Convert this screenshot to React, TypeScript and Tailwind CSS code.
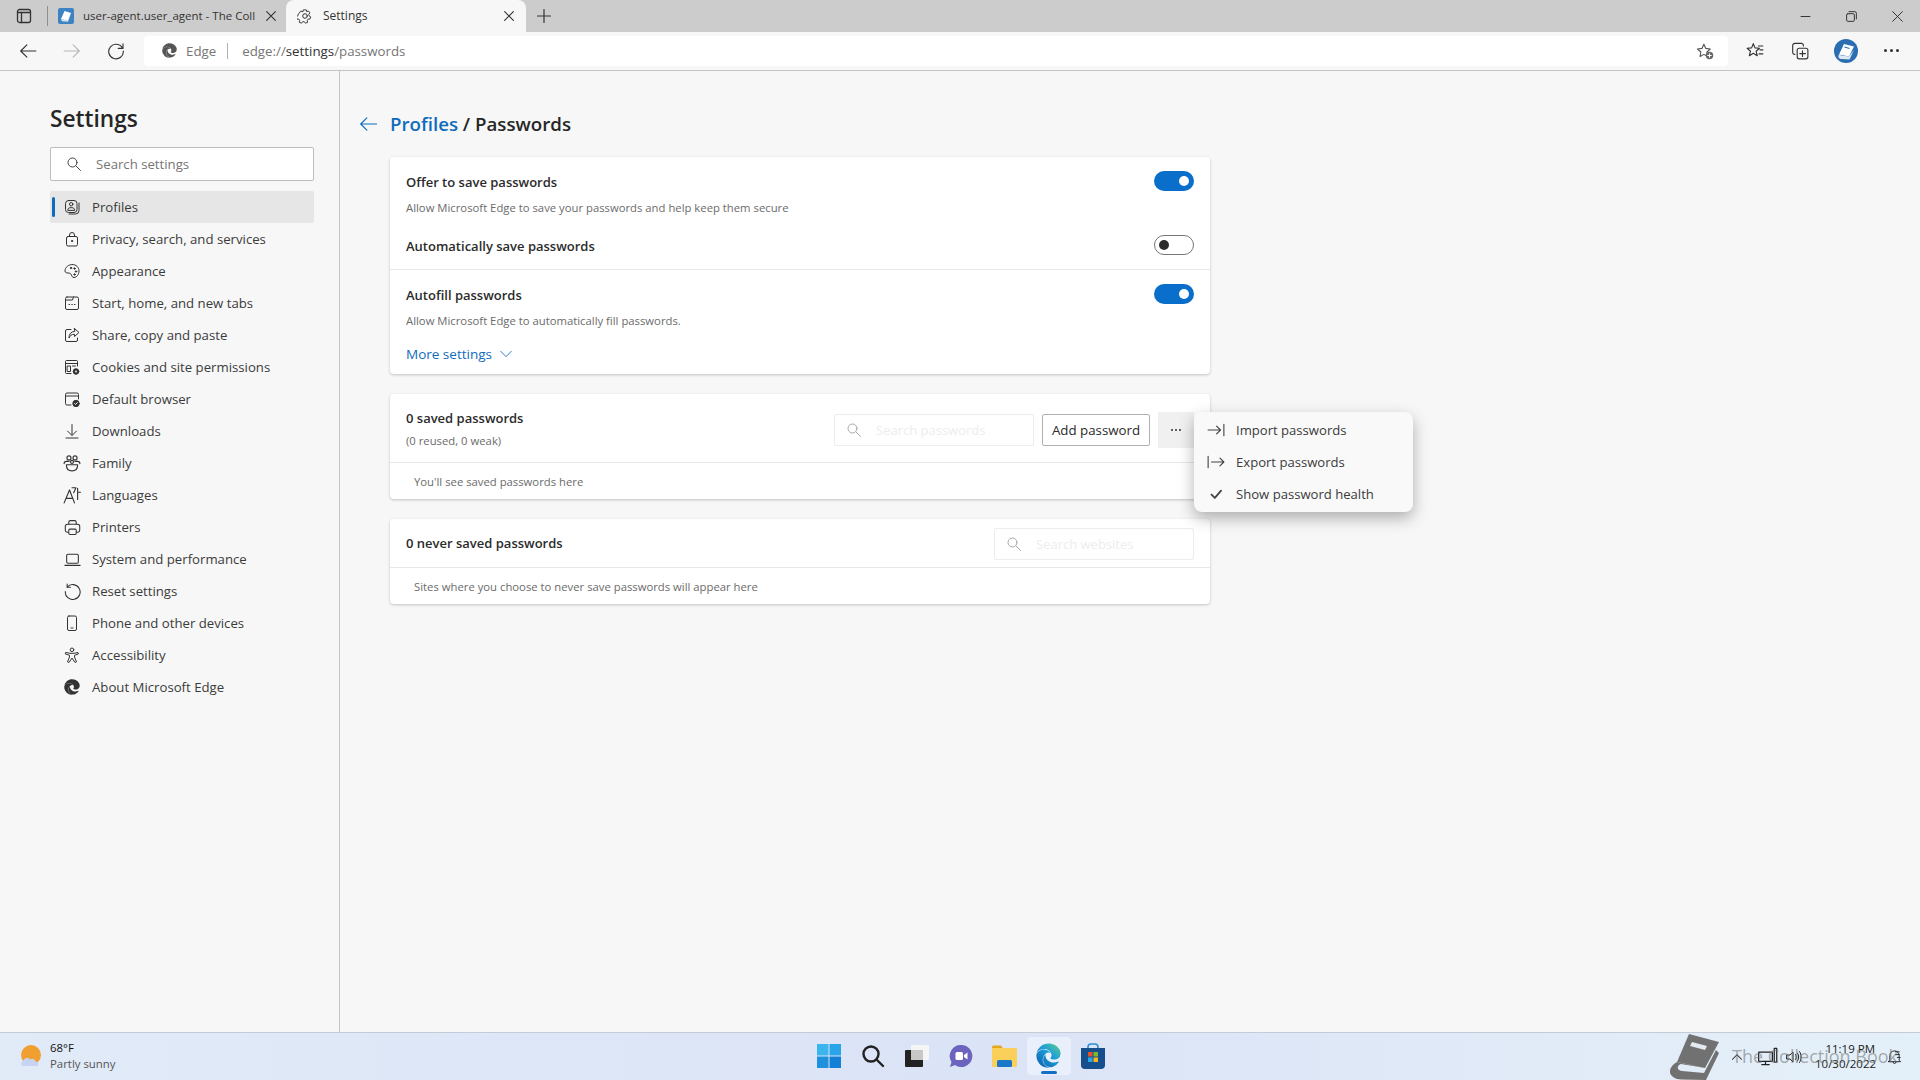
import type { ReactNode } from "react";
import { FaEdge } from "react-icons/fa";

function Ic({ size = 16, className = "", children }: { size?: number; className?: string; children: ReactNode }) {
  return (
    <svg width={size} height={size} viewBox="0 0 16 16" fill="none" stroke="currentColor" strokeWidth="1" strokeLinecap="round" strokeLinejoin="round" className={className}>
      {children}
    </svg>
  );
}

function BookLogo({ size = 18 }: { size?: number }) {
  return (
    <svg width={size} height={size} viewBox="0 0 24 24">
      <circle cx="12" cy="12" r="12" fill="#2a6db0" />
      <path d="M5 15.5 L10 5 L20 7.5 L15 17.5 Z" fill="#fff" />
      <path d="M5 15.5 C3.5 18 5 20 8 20 L15.5 20.5 L20 11 L15 17.5 L7.5 16.5 Z" fill="#dfe9f3" />
      <path d="M10.5 8 L15.5 9.5" stroke="#2a6db0" strokeWidth="1.3" />
    </svg>
  );
}

const SearchIcon = ({ className = "" }: { className?: string }) => (
  <Ic className={className}>
    <circle cx="6.5" cy="6.5" r="4.5" />
    <path d="M10 10l4.5 4.5" />
  </Ic>
);

const Gear = () => (
  <Ic size={16}>
    <path d="M6.6 1.5h2.8l.4 2 1.8-.9 1.7 2.2-1.4 1.4.4 1.7 1.7.9-.7 2.6-2 0-1 1.5.6 1.9-2.5 1-1.2-1.6-1.8 0-1.2 1.6-2.5-1 .6-1.9-1-1.5-2 0-.7-2.6 1.7-.9.4-1.7L1.8 4.8 3.5 2.6l1.8.9z" transform="translate(.6 .5) scale(.93)" />
    <circle cx="8" cy="8" r="2.3" />
  </Ic>
);

const navItems: { label: string; icon: ReactNode; active?: boolean }[] = [
  {
    label: "Profiles",
    active: true,
    icon: (
      <Ic>
        <rect x="1.5" y="1.5" width="11.5" height="12" rx="3" />
        <circle cx="7.2" cy="5.2" r="1.7" />
        <path d="M3.8 11c0-1.6 1-2.4 3.4-2.4s3.4.8 3.4 2.4zM15 4v7.5a3.5 3.5 0 0 1-3.5 3.5H5" />
      </Ic>
    ),
  },
  {
    label: "Privacy, search, and services",
    icon: (
      <Ic>
        <rect x="2.5" y="5.5" width="11" height="9.5" rx="1.5" />
        <path d="M5.5 5.5V4a2.5 2.5 0 0 1 5 0v1.5" />
        <circle cx="8" cy="10" r=".6" fill="currentColor" />
      </Ic>
    ),
  },
  {
    label: "Appearance",
    icon: (
      <Ic>
        <path d="M8.5 1.5c3.6 0 6.5 2.8 6.5 6.4 0 3.6-2.4 6.6-5 6.6-1.8 0-2-1.2-2.6-2.6-.6-1.5-1.6-1.9-3.4-1.9C2.3 10 1 9.5 1 8c0-3.8 3.5-6.5 7.5-6.5z" />
        <circle cx="7" cy="5" r=".7" fill="currentColor" />
        <circle cx="10.5" cy="5.5" r=".7" fill="currentColor" />
        <circle cx="12" cy="8.5" r=".7" fill="currentColor" />
        <circle cx="10.5" cy="11.5" r=".7" fill="currentColor" />
      </Ic>
    ),
  },
  {
    label: "Start, home, and new tabs",
    icon: (
      <Ic>
        <rect x="1.5" y="2" width="13" height="12.5" rx="1.5" />
        <path d="M1.5 5h7l1-3" />
        <path d="M5 9.5h.5M7.8 9.5h.5M10.5 9.5h.5" strokeWidth="1.2" />
      </Ic>
    ),
  },
  {
    label: "Share, copy and paste",
    icon: (
      <Ic>
        <path d="M7 2.5H3A1.5 1.5 0 0 0 1.5 4v9A1.5 1.5 0 0 0 3 14.5h9a1.5 1.5 0 0 0 1.5-1.5v-2" />
        <path d="M10.5 1.5L15 5.5l-4.5 4V7.3C7.5 7.3 6 8.5 5 11c0-4 2-6.3 5.5-6.7z" />
      </Ic>
    ),
  },
  {
    label: "Cookies and site permissions",
    icon: (
      <Ic>
        <path d="M7 14.5H2.5a1 1 0 0 1-1-1V2.5a1 1 0 0 1 1-1h10a1 1 0 0 1 1 1V7" />
        <path d="M1.5 4.5h12M3.5 7h3v5.5h-3zM8.5 7h3" />
        <circle cx="12" cy="12.5" r="2.8" fill="currentColor" />
        <circle cx="12" cy="12.5" r=".9" fill="#f7f7f7" stroke="none" />
      </Ic>
    ),
  },
  {
    label: "Default browser",
    icon: (
      <Ic>
        <path d="M7 14H3a1.5 1.5 0 0 1-1.5-1.5v-9A1.5 1.5 0 0 1 3 2h10a1.5 1.5 0 0 1 1.5 1.5V8M1.5 5h13" />
        <circle cx="12" cy="12.5" r="3.2" fill="currentColor" />
        <path d="M10.6 12.5l1 1 1.8-1.9" stroke="#f7f7f7" />
      </Ic>
    ),
  },
  {
    label: "Downloads",
    icon: (
      <Ic>
        <path d="M8 1.5v10.5M3.5 8l4.5 4.5L12.5 8M2 15h12" />
      </Ic>
    ),
  },
  {
    label: "Family",
    icon: (
      <Ic size={18}>
        <circle cx="5.3" cy="3.5" r="1.8" />
        <circle cx="10.7" cy="3.5" r="1.8" />
        <path d="M1 8.5c0-1.3.7-2 2-2h2.5M15 8.5c0-1.3-.7-2-2-2h-2.5" />
        <circle cx="8" cy="7" r="1.3" />
        <path d="M3 9.5h10c0 3.5-2 5.5-5 5.5s-5-2-5-5.5z" />
      </Ic>
    ),
  },
  {
    label: "Languages",
    icon: (
      <Ic size={18}>
        <path d="M1 15L5.8 3.5 10.2 15M2.8 11h6M8 1.5h3.5L9.5 6M13 2v10M13 5.5h2.5" />
      </Ic>
    ),
  },
  {
    label: "Printers",
    icon: (
      <Ic size={17}>
        <path d="M4.5 5V3a1.5 1.5 0 0 1 1.5-1.5h4A1.5 1.5 0 0 1 11.5 3v2" />
        <path d="M4 12.5H3A1.8 1.8 0 0 1 1.2 10.7V7A2 2 0 0 1 3.2 5h9.6a2 2 0 0 1 2 2v3.7A1.8 1.8 0 0 1 13 12.5h-1" />
        <rect x="4.5" y="9.5" width="7" height="5" rx="1" />
      </Ic>
    ),
  },
  {
    label: "System and performance",
    icon: (
      <Ic size={17}>
        <rect x="2.5" y="3" width="11" height="8.5" rx="1.3" />
        <path d="M.8 13.5h14.4" />
      </Ic>
    ),
  },
  {
    label: "Reset settings",
    icon: (
      <Ic size={17}>
        <path d="M3 3.8A7 7 0 1 1 1.2 8" />
        <path d="M3 1v3h3" />
      </Ic>
    ),
  },
  {
    label: "Phone and other devices",
    icon: (
      <Ic>
        <rect x="3.5" y="1" width="9" height="14.5" rx="1.5" />
        <path d="M7 13h2" />
      </Ic>
    ),
  },
  {
    label: "Accessibility",
    icon: (
      <Ic>
        <circle cx="8" cy="2.8" r="1.8" />
        <path d="M2 5.5L6 6.3h4L14 5.5 14.4 7 10.5 8.3V10l2 4.8-1.5.7L8 11l-3 4.5-1.5-.7 2-4.8V8.3L1.6 7z" />
      </Ic>
    ),
  },
  { label: "About Microsoft Edge", icon: <FaEdge size={16} className="text-[#333]" /> },
];

function Toggle({ on }: { on?: boolean }) {
  if (on) {
    return (
      <div className="flex h-5 w-10 items-center justify-end rounded-full bg-[#0a6ecb] px-[5px]">
        <div className="h-[10px] w-[10px] rounded-full bg-white" />
      </div>
    );
  }
  return (
    <div className="flex h-5 w-10 items-center rounded-full border border-[#767676] bg-white px-1">
      <div className="h-[10px] w-[10px] rounded-full bg-[#2b2b2b]" />
    </div>
  );
}

function SettingRow({ title, desc, on }: { title: string; desc?: string; on?: boolean }) {
  return (
    <div className="px-4">
      <div className="flex items-center justify-between">
        <span className="mt-[2px] text-[13px] font-semibold leading-[18px] text-[#2b2b2b]">{title}</span>
        <Toggle on={on} />
      </div>
      {desc && <div className="mt-[7px] h-5 text-[11.3px] leading-5 text-[#6b6b6b]">{desc}</div>}
    </div>
  );
}

function SearchBox({ placeholder }: { placeholder: string }) {
  return (
    <div className="flex h-8 w-[200px] items-center rounded-[2px] border border-[#ececec] bg-white pl-[11px] text-[13px] text-[#ededed]">
      <SearchIcon className="text-[#a8a8a8]" />
      <span className="ml-[14px] mt-[2px]">{placeholder}</span>
    </div>
  );
}

function Card({ children, className = "" }: { children: ReactNode; className?: string }) {
  return <section className={`w-[820px] rounded-[4px] bg-white shadow-[0_1px_3px_rgba(0,0,0,0.22)] ${className}`}>{children}</section>;
}

function BookIconTab() {
  return (
    <svg width="16" height="16" viewBox="0 0 16 16">
      <rect width="16" height="16" rx="2" fill="#3d83c4" />
      <path d="M3 11L6.5 3l6.5 2L10 13z" fill="#fff" />
      <path d="M3 11c0 2 1.5 2.5 3 2.5L10 13.8 13 6 10 13 5 11.5z" fill="#cfe0f0" />
    </svg>
  );
}

function TabBar() {
  return (
    <div className="flex h-8 items-end bg-[#cccccc] text-[#333]">
      <div className="flex h-8 w-[47px] items-center justify-center">
        <Ic size={16}>
          <rect x="1.5" y="1.5" width="13" height="13" rx="2" strokeWidth="1.3" />
          <path d="M1.5 4.5h13M5.5 4.5v10" strokeWidth="1.3" />
        </Ic>
      </div>
      <div className="h-[20px] w-px self-center bg-[#8f8f8f]" />
      <div className="flex h-8 w-[238px] items-center pl-[10px] text-[11.5px]">
        <BookIconTab />
        <span className="ml-[9px] w-[172px] overflow-hidden whitespace-nowrap">user-agent.user_agent - The Coll</span>
        <Ic size={14} className="ml-[9px]"><path d="M3 3l10 10M13 3L3 13" strokeWidth="1.3" /></Ic>
      </div>
      <div className="flex h-8 w-[240px] items-center rounded-t-[8px] bg-[#f7f7f7] pl-[11px] pr-[10px] text-[12px]">
        <Gear />
        <span className="ml-[10px] flex-1">Settings</span>
        <Ic size={14}><path d="M3 3l10 10M13 3L3 13" strokeWidth="1.3" /></Ic>
      </div>
      <div className="flex h-8 w-9 items-center justify-center">
        <Ic size={16}><path d="M8 1.5v13M1.5 8h13" strokeWidth="1.2" /></Ic>
      </div>
      <div className="ml-auto flex h-8">
        <div className="flex w-[46px] items-center justify-center"><Ic size={13}><path d="M2.5 8h11" strokeWidth="1.2" /></Ic></div>
        <div className="flex w-[46px] items-center justify-center">
          <Ic size={13}><rect x="2" y="4.5" width="9.5" height="9.5" rx="1.5" strokeWidth="1.2" /><path d="M5 2h7a2 2 0 0 1 2 2v7" strokeWidth="1.2" /></Ic>
        </div>
        <div className="flex w-[46px] items-center justify-center"><Ic size={13}><path d="M2 2l12 12M14 2L2 14" strokeWidth="1.2" /></Ic></div>
      </div>
    </div>
  );
}

function Toolbar() {
  return (
    <div className="flex h-[39px] items-center border-b border-[#c4c4c4] bg-[#f7f7f7] pb-[1px] text-[#333]">
      <div className="flex w-[144px] items-center pl-[19px]">
        <Ic size={18}><path d="M15 8H1.5M7 2.5L1.5 8 7 13.5" /></Ic>
        <Ic size={18} className="ml-[26px] text-[#b8b8b8]"><path d="M1 8h13.5M9 2.5L14.5 8 9 13.5" /></Ic>
        <Ic size={18} className="ml-[26px]"><path d="M13.8 5.5A6.5 6.5 0 1 0 14.5 8M14.2 1.5v4.2H10" /></Ic>
      </div>
      <div className="flex h-[30px] w-[1584px] items-center rounded-[4px] bg-white pl-[18px] pr-[14px] text-[13.3px] text-[#767676]">
        <FaEdge size={15} className="text-[#555]" />
        <span className="ml-[9px] mt-[2px]">Edge</span>
        <div className="ml-[11px] mr-[14px] h-[16px] w-px bg-[#b0b0b0]" />
        <span className="mt-[2px]">edge://<span className="text-[#333]">settings</span>/passwords</span>
        <Ic size={18} className="ml-auto text-[#555]">
          <path d="M7 2l1.7 3.7 4 .5-3 2.7.7 4L7 11l-3.4 1.9.7-4-3-2.7 4-.5z" />
          <circle cx="12" cy="12" r="3.3" fill="#666" stroke="none" />
          <path d="M12 10.4v3.2M10.4 12h3.2" stroke="#fff" />
        </Ic>
      </div>
      <div className="flex flex-1 items-center pl-[18px]">
        <Ic size={18}>
          <path d="M6.5 1.5l1.5 3.7 4 .4-3 2.6 1 4-3.5-2.2L3 12.2l1-4L1 5.6l4-.4zM11 3.5h4M12.5 7h2.5M11.5 10.5h3.5" />
        </Ic>
        <Ic size={18} className="ml-[27px]">
          <rect x="5.5" y="5.5" width="9.5" height="9.5" rx="1.8" />
          <path d="M10.2 7.8v5M7.8 10.3h5M11 3.5V3A1.8 1.8 0 0 0 9 1.2H3.5a2 2 0 0 0-2 2V9a1.8 1.8 0 0 0 2 2" />
        </Ic>
        <div className="ml-[25px]"><BookLogo size={24} /></div>
        <div className="ml-[26px] flex gap-[3px]">
          <i className="h-[3px] w-[3px] rounded-full bg-[#333]" />
          <i className="h-[3px] w-[3px] rounded-full bg-[#333]" />
          <i className="h-[3px] w-[3px] rounded-full bg-[#333]" />
        </div>
      </div>
    </div>
  );
}

function Sidebar() {
  return (
    <aside className="w-[340px] shrink-0 border-r border-[#c4c4c4] pl-[50px] pr-[25px] pt-[32px]">
      <h1 className="text-[22.7px] font-semibold leading-8 text-[#262626]">Settings</h1>
      <div className="mt-[12px] flex h-[34px] items-center rounded-[2px] border border-[#bdbdbd] bg-white pl-[15px] text-[13.2px] text-[#767676]">
        <SearchIcon className="text-[#444]" />
        <span className="ml-[14px] mt-[2px]">Search settings</span>
      </div>
      <nav className="mt-[10px]">
        {navItems.map((item) => (
          <div key={item.label} className={`relative flex h-8 items-center rounded-[2px] text-[13.2px] text-[#3b3b3b] ${item.active ? "bg-[#e6e6e6]" : ""}`}>
            {item.active && <div className="absolute left-[2px] top-[6px] h-5 w-[3px] rounded-full bg-[#0f6cbd]" />}
            <div className="flex w-[42px] justify-center pl-[2px] text-[#333]">{item.icon}</div>
            <span className="mt-[2px]">{item.label}</span>
          </div>
        ))}
      </nav>
    </aside>
  );
}

function PasswordMenu() {
  const rows = [
    { label: "Import passwords", icon: <path d="M1 8h11M8.5 4.5L12 8l-3.5 3.5M15 3v10" /> },
    { label: "Export passwords", icon: <path d="M1 3v10M4 8h11M11.5 4.5L15 8l-3.5 3.5" /> },
    { label: "Show password health", icon: <path d="M4 8.5L7 11.5 12.5 5" strokeWidth="1.6" /> },
  ];
  return (
    <div className="absolute left-[804px] top-[18px] w-[219px] rounded-[8px] bg-[#f9f9f9] py-[2px] shadow-[0_6px_16px_rgba(0,0,0,0.3)]">
      {rows.map((r) => (
        <div key={r.label} className="flex h-8 items-center pl-[13px] text-[13.1px] text-[#3b3b3b]">
          <Ic size={18} className="text-[#444]">{r.icon}</Ic>
          <span className="ml-[11px] mt-[2px]">{r.label}</span>
        </div>
      ))}
    </div>
  );
}

function Main() {
  return (
    <main className="flex-1 pl-[19px] pt-[37px]">
      <div className="flex h-8 items-center">
        <Ic size={18} className="text-[#0f6cbd]"><path d="M16 8H1.5M7 2.5L1.5 8 7 13.5" /></Ic>
        <div className="ml-[13px] text-[18.7px] font-semibold">
          <span className="text-[#0f6cbd]">Profiles</span>
          <span className="text-[#262626]"> / Passwords</span>
        </div>
      </div>
      <div className="ml-[31px] mt-[17px] flex flex-col gap-5">
        <Card className="h-[217px] pt-[14px]">
          <SettingRow title="Offer to save passwords" desc="Allow Microsoft Edge to save your passwords and help keep them secure" on />
          <div className="mt-[17px] h-[35px] border-b border-[#e8e8e8]">
            <SettingRow title="Automatically save passwords" />
          </div>
          <div className="mt-[14px]">
            <SettingRow title="Autofill passwords" desc="Allow Microsoft Edge to automatically fill passwords." on />
          </div>
          <div className="mt-[13px] flex items-center px-4 text-[13.5px] text-[#0f6cbd]">
            More settings
            <Ic size={14} className="ml-[7px]"><path d="M2 5l6 6 6-6" /></Ic>
          </div>
        </Card>
        <div className="relative">
          <Card className="h-[105px]">
            <div className="flex h-[69px] items-center justify-between border-b border-[#e8e8e8] pl-4 pr-[16px] pt-[3px]">
              <div>
                <div className="text-[13px] font-semibold leading-5 text-[#2b2b2b]">0 saved passwords</div>
                <div className="mt-[3px] text-[11.3px] leading-5 text-[#6b6b6b]">(0 reused, 0 weak)</div>
              </div>
              <div className="flex items-center">
                <SearchBox placeholder="Search passwords" />
                <div className="ml-2 flex h-8 w-[108px] items-center justify-center rounded-[2px] border border-[#b0b0b0] pt-[2px] text-[13.3px] text-[#2b2b2b]">Add password</div>
                <div className="ml-2 flex h-9 w-9 items-center justify-center gap-[2px] bg-[#f0f0f0]">
                  <i className="h-[2px] w-[2px] rounded-full bg-[#333]" />
                  <i className="h-[2px] w-[2px] rounded-full bg-[#333]" />
                  <i className="h-[2px] w-[2px] rounded-full bg-[#333]" />
                </div>
              </div>
            </div>
            <div className="flex h-[37px] items-center pl-6 pt-[2px] text-[11.3px] text-[#6b6b6b]">You'll see saved passwords here</div>
          </Card>
          <PasswordMenu />
        </div>
        <Card className="h-[85px]">
          <div className="flex h-[49px] items-center justify-between border-b border-[#e8e8e8] pl-4 pr-4 pt-[2px]">
            <span className="text-[13px] font-semibold text-[#2b2b2b]">0 never saved passwords</span>
            <SearchBox placeholder="Search websites" />
          </div>
          <div className="flex h-[36px] items-center pl-6 pt-[2px] text-[11.3px] text-[#6b6b6b]">Sites where you choose to never save passwords will appear here</div>
        </Card>
      </div>
    </main>
  );
}

function Taskbar() {
  return (
    <footer className="relative grid h-[48px] grid-cols-[1fr_auto_1fr] items-center border-t border-[#c4cbd6] bg-gradient-to-r from-[#e1ebf8] via-[#dbe3f6] to-[#e4f0f9]">
      <div className="flex items-center pl-[20px]">
        <svg width="24" height="26" viewBox="0 0 24 26">
          <circle cx="11" cy="11" r="10" fill="#f0a030" />
          <path d="M3 22c-2 0-2.5-4 0-4.5C3.5 14 8 13 10 15.5c2-1.5 5-.5 5.5 2 3 0 4 4.5 1 4.5z" fill="#c6d3f2" />
        </svg>
        <div className="ml-[6px] -mt-[2px] text-[11.4px] leading-[16px]">
          <div className="text-[#111]">68°F</div>
          <div className="text-[#555]">Partly sunny</div>
        </div>
      </div>
      <div className="ml-[1px] -mt-[2px] flex items-center">
        <div className="flex h-10 w-11 items-center justify-center">
          <svg width="24" height="24" viewBox="0 0 24 24">
            <rect x="0" y="0" width="11.5" height="11.5" fill="#3cb4ee" />
            <rect x="12.5" y="0" width="11.5" height="11.5" fill="#2aa4e8" />
            <rect x="0" y="12.5" width="11.5" height="11.5" fill="#1e90dc" />
            <rect x="12.5" y="12.5" width="11.5" height="11.5" fill="#1280d4" />
          </svg>
        </div>
        <div className="flex h-10 w-11 items-center justify-center">
          <svg width="24" height="24" viewBox="0 0 24 24" fill="none" stroke="#222" strokeWidth="2.4" strokeLinecap="round">
            <circle cx="10" cy="10" r="7.5" />
            <path d="M16 16l6 6" />
          </svg>
        </div>
        <div className="flex h-10 w-11 items-center justify-center">
          <svg width="24" height="22" viewBox="0 0 24 22">
            <rect x="6" y="0" width="18" height="15" rx="1" fill="#f5f5f5" />
            <rect x="0" y="5" width="18" height="17" rx="1" fill="#222" />
            <rect x="6" y="5" width="12" height="10" fill="#c8c8c8" />
          </svg>
        </div>
        <div className="flex h-10 w-11 items-center justify-center">
          <svg width="24" height="24" viewBox="0 0 24 24">
            <path d="M12 1a11 11 0 1 1-6 20L1 23l1.5-5A11 11 0 0 1 12 1z" fill="#6b63bd" />
            <rect x="6.5" y="8" width="7.5" height="8" rx="1.5" fill="#fff" />
            <path d="M15 11l3.5-2.5v7L15 13z" fill="#fff" />
          </svg>
        </div>
        <div className="flex h-10 w-11 items-center justify-center">
          <svg width="25" height="22" viewBox="0 0 25 22">
            <path d="M0 2a1.5 1.5 0 0 1 1.5-1.5H9L11.5 4H0z" fill="#e3a81f" />
            <rect x="0" y="3" width="25" height="19" rx="1" fill="#fbd05a" />
            <rect x="5" y="15" width="15" height="7" rx="1.5" fill="#1b78c8" />
          </svg>
        </div>
        <div className="relative flex h-[38px] w-11 items-center justify-center rounded-[4px] bg-[#e9f0fb]">
          <svg width="0" height="0" className="absolute">
            <defs>
              <linearGradient id="edgeFill" x1="1" y1="0" x2="0.1" y2="1">
                <stop offset="0" stopColor="#5fd08a" />
                <stop offset="0.45" stopColor="#1e9fd8" />
                <stop offset="1" stopColor="#0b5fb0" />
              </linearGradient>
            </defs>
          </svg>
          <FaEdge size={25} className="fill-[url(#edgeFill)]" />
          <div className="absolute bottom-[1px] h-[3px] w-4 rounded-full bg-[#1270c4]" />
        </div>
        <div className="flex h-10 w-11 items-center justify-center">
          <svg width="24" height="26" viewBox="0 0 24 26">
            <path d="M7 6V4a3 3 0 0 1 3-3h4a3 3 0 0 1 3 3v2" fill="none" stroke="#2a8fd0" strokeWidth="1.6" />
            <path d="M0 5h24v17a4 4 0 0 1-4 4H4a4 4 0 0 1-4-4z" fill="#174f8c" />
            <rect x="7" y="9" width="4.5" height="4.5" fill="#e8502c" />
            <rect x="12.5" y="9" width="4.5" height="4.5" fill="#7cb82c" />
            <rect x="7" y="14.5" width="4.5" height="4.5" fill="#28a8e8" />
            <rect x="12.5" y="14.5" width="4.5" height="4.5" fill="#f8b81c" />
          </svg>
        </div>
      </div>
      <div className="flex items-center justify-end pr-[18px] text-[#222]">
        <Ic size={12}><path d="M2 11l6-6 6 6" strokeWidth="1.4" /></Ic>
        <Ic size={20} className="ml-[15px]">
          <rect x=".5" y="4" width="11" height="7.5" rx=".5" />
          <path d="M3 14h6M6 11.5V14M13 1h2v11h-2z" />
        </Ic>
        <Ic size={16} className="ml-[8px]">
          <path d="M1 6h3l3-3v10l-3-3H1zM9.5 5.5c1 1.5 1 3.5 0 5M11.5 4c1.6 2.5 1.6 5.5 0 8M13.5 2.5c2.2 3.3 2.2 7.7 0 11" />
        </Ic>
        <div className="-mt-[2px] ml-[13px] w-[60px] text-right text-[11.5px] leading-[15px]">
          <div>11:19 PM</div>
          <div>10/30/2022</div>
        </div>
        <Ic size={15} className="ml-[12px]">
          <path d="M3 12V7a5 5 0 0 1 10 0v5l1.5 1.5h-13zM6.5 14a1.5 1.5 0 0 0 3 0M9 3h4M9 6h4M11 9h3" />
        </Ic>
      </div>
      {/* watermark over the tray */}
      <div className="absolute bottom-0 right-[22px] top-0 flex items-center text-[#77777799]">
        <svg width="52" height="47" viewBox="0 0 52 47" className="mr-[12px]">
          <path d="M21 1L51 9 37 35 9 29z" fill="#6a6a6a" fillOpacity="0.95" />
          <path d="M9 29C2 33 0 39 4 43c2 2.5 6 3.5 10 3.5L38 47 51 20l-3-3-12 23-22-2c-6-1-5-6-1-7l24 4z" fill="#6a6a6a" fillOpacity="0.95" />
          <path d="M24 9l15 4-2 4-15-4z" fill="#e4eaf2" />
        </svg>
        <span className="text-[18px]">The Collection Book</span>
      </div>
    </footer>
  );
}

export default function App() {
  return (
    <div className="flex h-[1080px] w-[1920px] flex-col overflow-hidden bg-[#f7f7f7] font-['Open_Sans',sans-serif]">
      <TabBar />
      <Toolbar />
      <div className="flex min-h-0 flex-1">
        <Sidebar />
        <Main />
      </div>
      <Taskbar />
    </div>
  );
}
